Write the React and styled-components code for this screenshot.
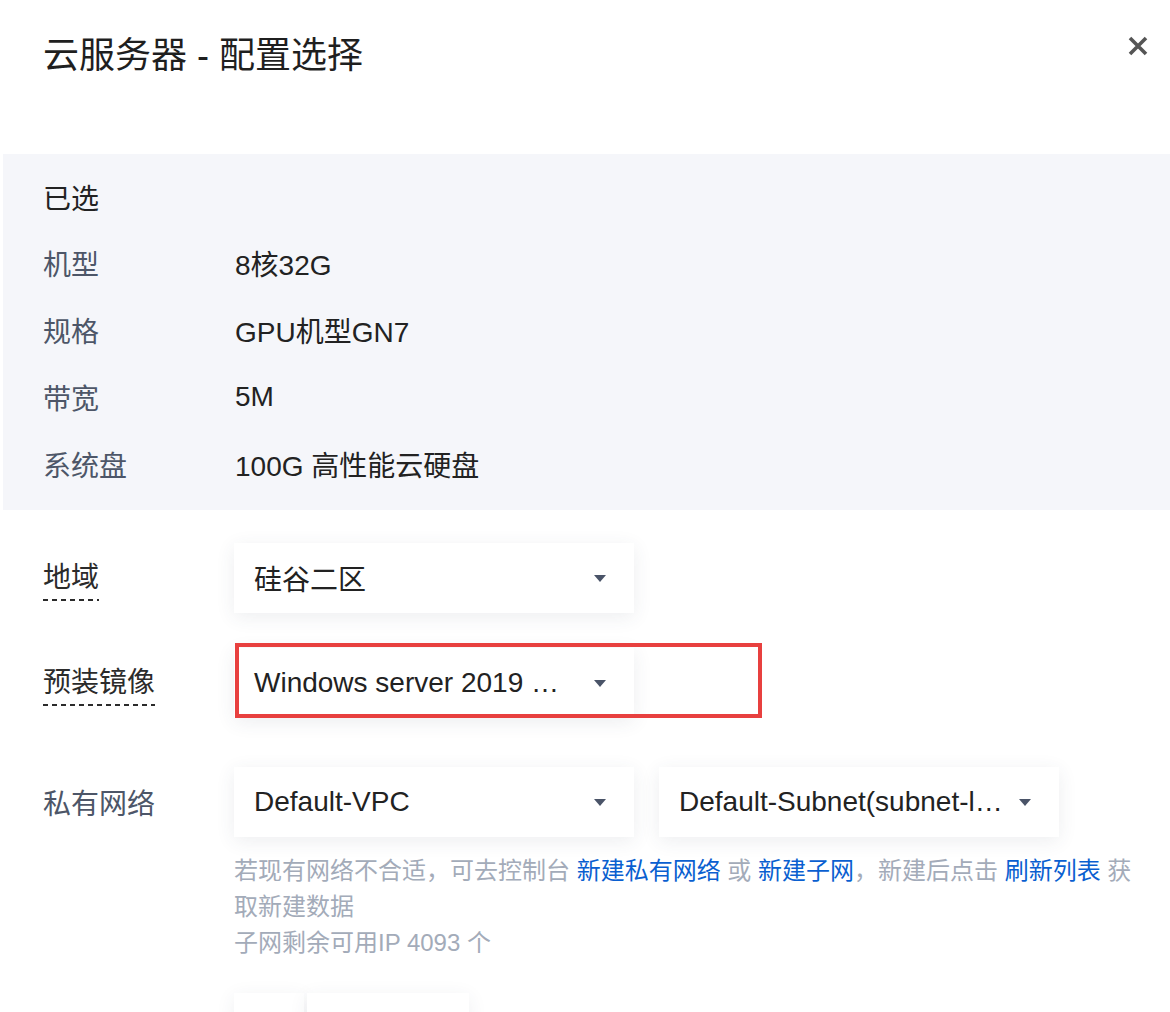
import React from 'react';
import styled, { createGlobalStyle } from 'styled-components';

const GlobalStyle = createGlobalStyle`
  html, body { margin: 0; padding: 0; background: #fff; }
  body {
    font-family: "Liberation Sans", Arial, "Noto Sans CJK SC", sans-serif;
    color: #222;
    overflow: hidden;
  }
`;

const Dialog = styled.div`
  width: 1170px;
  height: 1012px;
  overflow: hidden;
  background: #fff;
`;

const Header = styled.div`
  display: flex;
  align-items: flex-start;
  justify-content: space-between;
  height: 154px;
  box-sizing: border-box;
  padding: 32px 22px 0 43px;
`;

const Title = styled.h1`
  margin: 0;
  font-size: 36px;
  line-height: 48px;
  font-weight: 400;
  color: #1f1f1f;
`;

const Close = styled.button`
  border: 0;
  background: none;
  padding: 0;
  margin-top: 4px;
  width: 20px;
  height: 20px;
  cursor: pointer;
  svg { display: block; }
`;

const Summary = styled.div`
  margin-left: 3px;
  background: #f5f6fa;
  padding: 11px 0 13px 40px;
`;

const SummaryRow = styled.div`
  display: flex;
  align-items: center;
  height: ${p => (p.$first ? 64 : 67)}px;
  font-size: 28px;
`;

const SummaryLabel = styled.div`
  width: 192px;
  flex-shrink: 0;
  color: ${p => (p.$strong ? '#222' : '#4d5668')};
`;

const SummaryValue = styled.div`
  color: #222;
`;

const Form = styled.div`
  padding: 33px 0 0 43px;
`;

const FormRow = styled.div`
  display: flex;
  align-items: flex-start;
  margin-bottom: ${p => p.$gap || 35}px;
`;

const FieldLabel = styled.div`
  width: 191px;
  flex-shrink: 0;
  height: 70px;
  display: flex;
  align-items: center;
  font-size: 28px;
  color: ${p => (p.$muted ? '#4d5668' : '#2b2b2b')};
`;

const Tip = styled.span`
  position: relative;
  line-height: 34px;
  &::after {
    content: '';
    position: absolute;
    left: 0;
    right: 0;
    bottom: -6px;
    height: 2px;
    background: repeating-linear-gradient(to right, #2b2b2b 0 5px, transparent 5px 9px);
  }
`;

const Field = styled.div`
  position: relative;
  width: 906px;
`;

const Selects = styled.div`
  display: flex;
  gap: 25px;
`;

const Select = styled.div`
  width: 400px;
  height: 70px;
  box-sizing: border-box;
  background: #fff;
  box-shadow: 0 4px 18px rgba(54, 62, 90, 0.09);
  display: flex;
  align-items: center;
  justify-content: space-between;
  padding: 0 28px 0 20px;
  font-size: 28px;
  color: #222;
  white-space: nowrap;
`;

const Caret = styled.span`
  width: 0;
  height: 0;
  border-left: 6px solid transparent;
  border-right: 6px solid transparent;
  border-top: 7px solid #4a5468;
  margin-left: 12px;
`;

const Highlight = styled.div`
  position: absolute;
  left: 1px;
  top: -5px;
  width: 527px;
  height: 75px;
  box-sizing: border-box;
  border: 4px solid #e8403f;
  pointer-events: none;
`;

const Help = styled.div`
  margin-top: 16px;
  font-size: 24px;
  line-height: 36px;
  color: #a3abb9;
`;

const Link = styled.a`
  color: #0a5fd0;
  text-decoration: none;
`;

const Toggles = styled.div`
  display: flex;
  gap: 3px;
`;

const Toggle = styled.div`
  width: ${p => p.$w}px;
  height: 70px;
  background: #fff;
  box-shadow: 0 4px 18px rgba(54, 62, 90, 0.08);
`;

const summary = [
  ['机型', '8核32G'],
  ['规格', 'GPU机型GN7'],
  ['带宽', '5M'],
  ['系统盘', '100G 高性能云硬盘'],
];

export default function App() {
  return (
    <Dialog>
      <GlobalStyle />
      <Header>
        <Title>云服务器 - 配置选择</Title>
        <Close aria-label="关闭">
          <svg width="20" height="20" viewBox="0 0 20 20">
            <path d="M2 2 L18 18 M18 2 L2 18" stroke="#555" strokeWidth="3.6" />
          </svg>
        </Close>
      </Header>

      <Summary>
        <SummaryRow $first>
          <SummaryLabel $strong>已选</SummaryLabel>
        </SummaryRow>
        {summary.map(([k, v]) => (
          <SummaryRow key={k}>
            <SummaryLabel>{k}</SummaryLabel>
            <SummaryValue>{v}</SummaryValue>
          </SummaryRow>
        ))}
      </Summary>

      <Form>
        <FormRow>
          <FieldLabel><Tip>地域</Tip></FieldLabel>
          <Field>
            <Select>硅谷二区<Caret /></Select>
          </Field>
        </FormRow>

        <FormRow $gap={49}>
          <FieldLabel><Tip>预装镜像</Tip></FieldLabel>
          <Field>
            <Select>Windows server 2019 …<Caret /></Select>
            <Highlight />
          </Field>
        </FormRow>

        <FormRow $gap={32}>
          <FieldLabel $muted>私有网络</FieldLabel>
          <Field>
            <Selects>
              <Select>Default-VPC<Caret /></Select>
              <Select>Default-Subnet(subnet-l…<Caret /></Select>
            </Selects>
            <Help>
              若现有网络不合适，可去控制台 <Link href="#">新建私有网络</Link> 或 <Link href="#">新建子网</Link>，新建后点击 <Link href="#">刷新列表</Link> 获取新建数据
              <br />
              子网剩余可用IP 4093 个
            </Help>
          </Field>
        </FormRow>

        <FormRow>
          <FieldLabel />
          <Field>
            <Toggles>
              <Toggle $w={70} />
              <Toggle $w={162} />
            </Toggles>
          </Field>
        </FormRow>
      </Form>
    </Dialog>
  );
}
